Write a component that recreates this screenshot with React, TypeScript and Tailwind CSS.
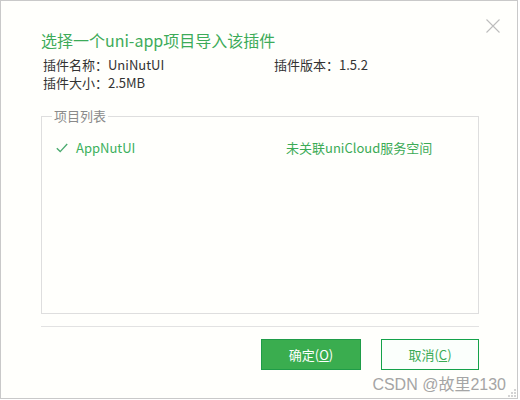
import React from "react";

function CloseIcon() {
  return (
    <svg width="14" height="14" viewBox="0 0 14 14" className="block">
      <path d="M0.5 0.5 L13.5 13.5 M13.5 0.5 L0.5 13.5" stroke="#bdbdbd" strokeWidth="1.1" fill="none" />
    </svg>
  );
}

function Grip() {
  return (
    <svg width="8" height="8" viewBox="0 0 8 8" className="block">
      <rect x="6" y="0" width="2" height="2" fill="#d4d4d4" />
      <rect x="3" y="3" width="2" height="2" fill="#d4d4d4" />
      <rect x="6" y="3" width="2" height="2" fill="#d4d4d4" />
      <rect x="0" y="6" width="2" height="2" fill="#d4d4d4" />
      <rect x="3" y="6" width="2" height="2" fill="#d4d4d4" />
      <rect x="6" y="6" width="2" height="2" fill="#d4d4d4" />
    </svg>
  );
}

export default function App() {
  return (
    <div className="relative w-[518px] h-[399px] border border-[#c9c9c9] bg-[#fffffc] pl-10 pr-[38px] pt-[28px] font-['Noto_Sans_CJK_SC',sans-serif] text-[13px] text-[#333]">
      {/* close button */}
      <button className="absolute right-[17px] top-[18px]">
        <CloseIcon />
      </button>

      <h1 className="text-[16px] leading-[22px] text-[#3dab59]">选择一个uni-app项目导入该插件</h1>

      <div className="mt-[5px] grid grid-cols-[231px_1fr] leading-[18px] pl-[2px]">
        <div>插件名称：UniNutUI</div>
        <div>插件版本：1.5.2</div>
        <div>插件大小：2.5MB</div>
      </div>

      <fieldset className="mt-[15px] h-[207px] border border-[#dedede] px-[14px]">
        <legend className="px-[2px] ml-[-4px] text-[#8a8a8a] leading-[18px]">项目列表</legend>
        <div className="mt-[14px] flex items-center leading-[18px]">
          <span className="w-[20px]">
            <svg width="12" height="10" viewBox="0 0 12 10" className="block">
              <path d="M0.8 5.2 L4.2 8.6 L11.2 1" stroke="#4cab70" strokeWidth="1.4" fill="none" />
            </svg>
          </span>
          <span className="w-[210px] text-[#3cb05c]">AppNutUI</span>
          <span className="text-[#3cab56]">未关联uniCloud服务空间</span>
        </div>
      </fieldset>

      <div className="mt-[12px] h-px bg-[#e2e2e2]" />

      <div className="mt-[12px] flex justify-end gap-[20px]">
        <button className="w-[100px] h-[31px] border border-[#1f9c48] bg-[#3aad4f] text-white text-[13px]">
          确定(<span className="underline">O</span>)
        </button>
        <button className="w-[98px] h-[31px] border border-[#14a24a] bg-[#fbfffc] text-[#3aab55] text-[13px]">
          取消(<span className="underline">C</span>)
        </button>
      </div>

      {/* watermark */}
      <div className="absolute right-[11px] bottom-[3px] text-[16px] leading-[20px] text-[#a5a5a5] font-['Liberation_Sans','Noto_Sans_CJK_SC',sans-serif]">
        CSDN @故里2130
      </div>
      <div className="absolute right-[1px] bottom-[1px]">
        <Grip />
      </div>
    </div>
  );
}
